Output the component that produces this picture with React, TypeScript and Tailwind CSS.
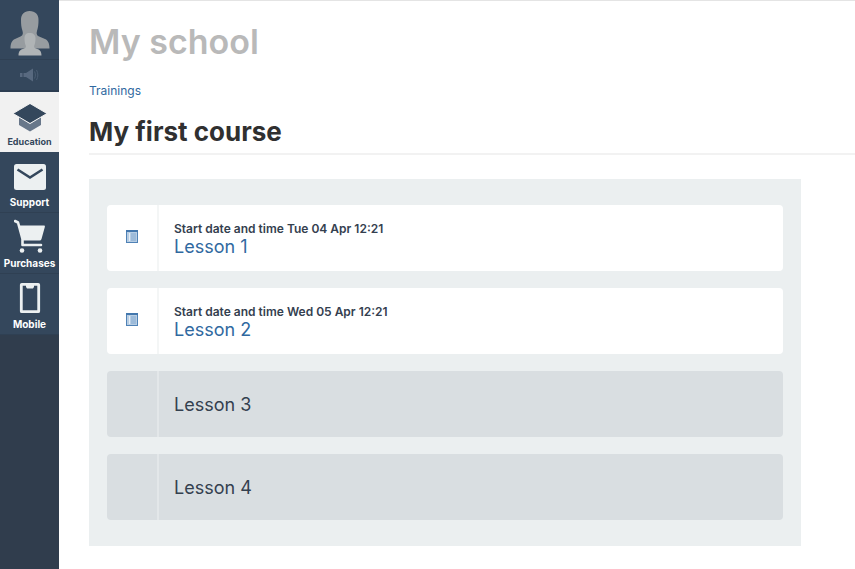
import type { ReactNode } from "react";

type Lesson = { title: string; start?: string };

const lessons: Lesson[] = [
  { title: "Lesson 1", start: "Tue 04 Apr 12:21" },
  { title: "Lesson 2", start: "Wed 05 Apr 12:21" },
  { title: "Lesson 3" },
  { title: "Lesson 4" },
];

function AvatarIcon() {
  return (
    <svg width="40" height="45" viewBox="0 0 40 45" aria-hidden="true">
      <path
        d="M19.500 0C14 0 11 3.500 11 9c0 4 .3 7.500 1.500 11 .5 1.800.8 4-1.500 5.200L5 28C2 29.500.5 32 .5 37.500h39c0-5.500-1.500-8-4.500-9.500l-6.500-2.800C26.200 24 26.500 21.800 27 20c1.200-3.500 1.500-7 1.500-11 0-5.500-3-9-9-9z"
        fill="#979ca0"
      />
      <path
        d="M19.500 22c-3.500 0-5 2-5 5.500 0 2.500.4 5 1.200 7 .5 1.500 0 2.500-1.700 3-3 1-5.500 2-5.500 7h23c0-5-2.500-6-5.500-7-1.700-.5-2.200-1.500-1.700-3 .8-2 1.200-4.500 1.200-7 0-3.500-2-5.500-6-5.500z"
        fill="#b0b4b6"
      />
    </svg>
  );
}

function MegaphoneIcon() {
  return (
    <svg width="20" height="14" viewBox="0 0 20 14" aria-hidden="true">
      <path d="M0 5h2.500v4H0zM3.500 5H6l7-4.500v13L6 9H3.500z" fill="#58697f" />
      <path d="M14.500 3.500c1.200 2 1.200 5 0 7M16.500 2c1.800 3 1.800 7 0 10" fill="none" stroke="#4b5d73" />
    </svg>
  );
}

function EducationIcon() {
  return (
    <svg width="34" height="28" viewBox="0 0 34 28" aria-hidden="true">
      <path d="M6 13l11 7 11-7v8l-11 6.500L6 21z" fill="#68778a" />
      <path d="M17-.5l17 10L17 19.500 0 9.500z" fill="#34475c" stroke="#f1f1f1" strokeWidth="1" />
    </svg>
  );
}

function MailIcon() {
  return (
    <svg width="34" height="28" viewBox="0 0 34 28" aria-hidden="true">
      <rect x="1" y="0" width="32" height="26" rx="2.500" fill="#ecf0f1" />
      <path d="M4.500 5.500L17 13.500 29.500 5.500" fill="none" stroke="#34475c" strokeWidth="2.600" />
    </svg>
  );
}

function CartIcon() {
  return (
    <svg width="32" height="34" viewBox="0 0 32 34" aria-hidden="true">
      <path d="M1 2l3 1.500L8.500 20v6H27" fill="none" stroke="#ecf0f1" strokeWidth="2.600" strokeLinejoin="round" strokeLinecap="round" />
      <path d="M4.500 6.500h25.500q1.200 0 .9 1.200L27.500 20q-.4 1.500-2 1.500H8.500z" fill="#ecf0f1" />
      <circle cx="8" cy="31.500" r="2.300" fill="#ecf0f1" />
      <circle cx="26" cy="31.500" r="2.300" fill="#ecf0f1" />
    </svg>
  );
}

function MobileIcon() {
  return (
    <svg width="22" height="32" viewBox="0 0 22 32" aria-hidden="true">
      <rect x="2.300" y="2.300" width="17.400" height="27.400" rx=".5" fill="none" stroke="#ecf0f1" strokeWidth="2.800" />
      <path d="M7 3h8v2l-1 1.500H8L7 5z" fill="#ecf0f1" />
    </svg>
  );
}

function ListIcon() {
  return (
    <svg width="12" height="13" viewBox="0 0 12 13" aria-hidden="true">
      <rect x=".5" y=".5" width="11" height="12" fill="#b7cde3" stroke="#4f82b6" />
      <path d="M0 1h12" stroke="#4377ad" strokeWidth="2" />
      <path d="M3.500 3v8" stroke="#e6eef6" />
      <path d="M5 4h5M5 6h5M5 8h5M5 10h5" stroke="#82a8cf" />
    </svg>
  );
}

function NavItem({ label, icon, active = false }: { label: string; icon: ReactNode; active?: boolean }) {
  const colours = active
    ? "h-15 bg-[#f1f1f1] text-[#34475c] border-[#f1f1f1] text-[9px]"
    : "h-[61px] bg-[#34475c] text-white border-[#2f4053] text-[10px]";
  return (
    <a href="#" className={`flex w-full flex-col items-center border-b font-bold ${colours}`}>
      <span className="flex h-11 items-end justify-center pb-1">{icon}</span>
      <span className="leading-3">{label}</span>
    </a>
  );
}

function LessonRow({ title, start }: Lesson) {
  const open = start !== undefined;
  return (
    <li className={`flex h-[66px] rounded-[4px] ${open ? "bg-white" : "bg-[#d9dee1]"}`}>
      <div className={`flex w-[52px] items-center justify-center border-r-2 pb-1 ${open ? "border-[#f4f6f6]" : "border-[#e3e7e9]"}`}>
        {open && <ListIcon />}
      </div>
      <div className="flex flex-col justify-center px-[15px] pt-0.5">
        {open && <p className="text-[12px] leading-4 font-semibold text-[#34404f]">Start date and time {start}</p>}
        {open ? (
          <a href="#" className="text-[18px] leading-5 text-[#3069a0]">{title}</a>
        ) : (
          <span className="text-[18px] leading-5 text-[#34404f]">{title}</span>
        )}
      </div>
    </li>
  );
}

export default function App() {
  return (
    <div className="flex min-h-screen bg-white font-['Inter','Liberation_Sans',sans-serif]">
      <nav className="w-[59px] shrink-0 bg-[#303d4d]">
        <a href="#" aria-label="Profile" className="flex h-15 items-end justify-center border-b border-[#2f4053] bg-[#34475c] pb-[3px]">
          <AvatarIcon />
        </a>
        <button type="button" aria-label="Notifications" className="flex h-8 w-full items-center justify-center border-b-2 border-[#2c3d51] bg-[#34475c]">
          <MegaphoneIcon />
        </button>
        <NavItem label="Education" icon={<EducationIcon />} active />
        <NavItem label="Support" icon={<MailIcon />} />
        <NavItem label="Purchases" icon={<CartIcon />} />
        <NavItem label="Mobile" icon={<MobileIcon />} />
      </nav>
      <main className="min-w-0 flex-1 border-t border-[#e4e4e4] pl-[30px]">
        <h1 className="pt-[21px] text-[34px] leading-10 font-semibold text-[#b9b9b9]">My school</h1>
        <a href="#" className="mt-[21px] block text-[12px] leading-4 text-[#3069a0]">Trainings</a>
        <h2 className="mt-[15px] border-b-2 border-[#f2f2f2] pb-[3px] text-[26px] leading-9 font-bold text-[#303030]">My first course</h2>
        <ul className="mt-6 mr-[54px] flex flex-col gap-[17px] bg-[#ebeff0] px-[18px] py-[26px]">
          {lessons.map((lesson) => (
            <LessonRow key={lesson.title} {...lesson} />
          ))}
        </ul>
      </main>
    </div>
  );
}
